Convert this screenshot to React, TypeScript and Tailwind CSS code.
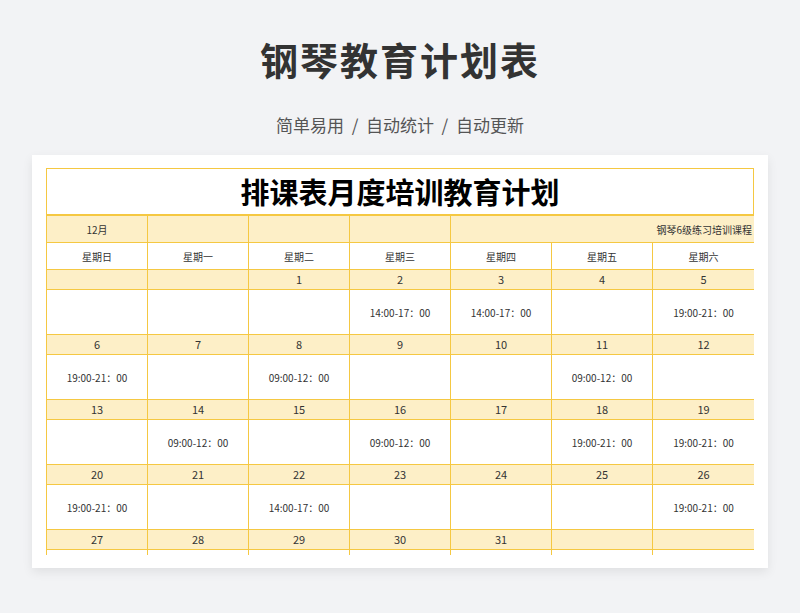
const F = { fontFamily: '"Noto Sans CJK SC","Noto Sans",sans-serif' };
const weeks: (string | number)[][] = [
  ["", "", 1, 2, 3, 4, 5],
  [6, 7, 8, 9, 10, 11, 12],
  [13, 14, 15, 16, 17, 18, 19],
  [20, 21, 22, 23, 24, 25, 26],
  [27, 28, 29, 30, 31, "", ""],
];
const times: string[][] = [
  ["", "", "", "14:00-17：00", "14:00-17：00", "", "19:00-21：00"],
  ["19:00-21：00", "", "09:00-12：00", "", "", "09:00-12：00", ""],
  ["", "09:00-12：00", "", "09:00-12：00", "", "19:00-21：00", "19:00-21：00"],
  ["19:00-21：00", "", "14:00-17：00", "", "", "", "19:00-21：00"],
  ["", "", "", "", "", "", ""],
];
const days = ["星期日", "星期一", "星期二", "星期三", "星期四", "星期五", "星期六"];
const cell = "border-r border-b border-[#f5c842] flex items-center justify-center text-[10px] text-[#333]";

export default function App() {
  return (
    <div className="w-[800px] h-[613px] bg-[#f2f3f5] flex flex-col items-center overflow-hidden" style={F}>
      <div className="mt-[33px] text-[38px] font-bold text-[#333] leading-[52px] tracking-[2px]">钢琴教育计划表</div>
      <div className="mt-[28px] text-[17px] text-[#555] leading-[24px] whitespace-pre">简单易用  /  自动统计  /  自动更新</div>
      <div className="mt-[18px] w-[736px] h-[413px] bg-white shadow-[0_4px_10px_rgba(0,0,0,0.08)] pt-[13px] pl-[14px] overflow-hidden">
        <div className="w-[708px] h-[387px] overflow-hidden border-l border-t border-[#f5c842]">
          <div className="h-[47px] border-r border-b-2 border-[#f5c842] flex items-center justify-center text-[29px] font-bold text-black">排课表月度培训教育计划</div>
          <div className="grid grid-cols-[101px_101px_101px_101px_304px] h-[27px] bg-[#fdefc7]">
            <div className={cell}>12月</div>
            <div className={cell}></div>
            <div className={cell}></div>
            <div className={cell}></div>
            <div className={cell + " !justify-end pr-[2px]"}>钢琴6级练习培训课程</div>
          </div>
          <div className="grid grid-cols-[101px_101px_101px_101px_101px_101px_102px] h-[27px]">
            {days.map((d) => <div key={d} className={cell}>{d}</div>)}
          </div>
          {weeks.map((w, i) => (
            <div key={i}>
              <div className="grid grid-cols-[101px_101px_101px_101px_101px_101px_102px] h-[20px] bg-[#fdefc7]">
                {w.map((d, j) => <div key={j} className={cell + " text-[11px]"}>{d}</div>)}
              </div>
              <div className="grid grid-cols-[101px_101px_101px_101px_101px_101px_102px] h-[45px]">
                {times[i].map((t, j) => <div key={j} className={cell + " text-[10px] pt-[1px]"}>{t}</div>)}
              </div>
            </div>
          ))}
        </div>
      </div>
    </div>
  );
}
